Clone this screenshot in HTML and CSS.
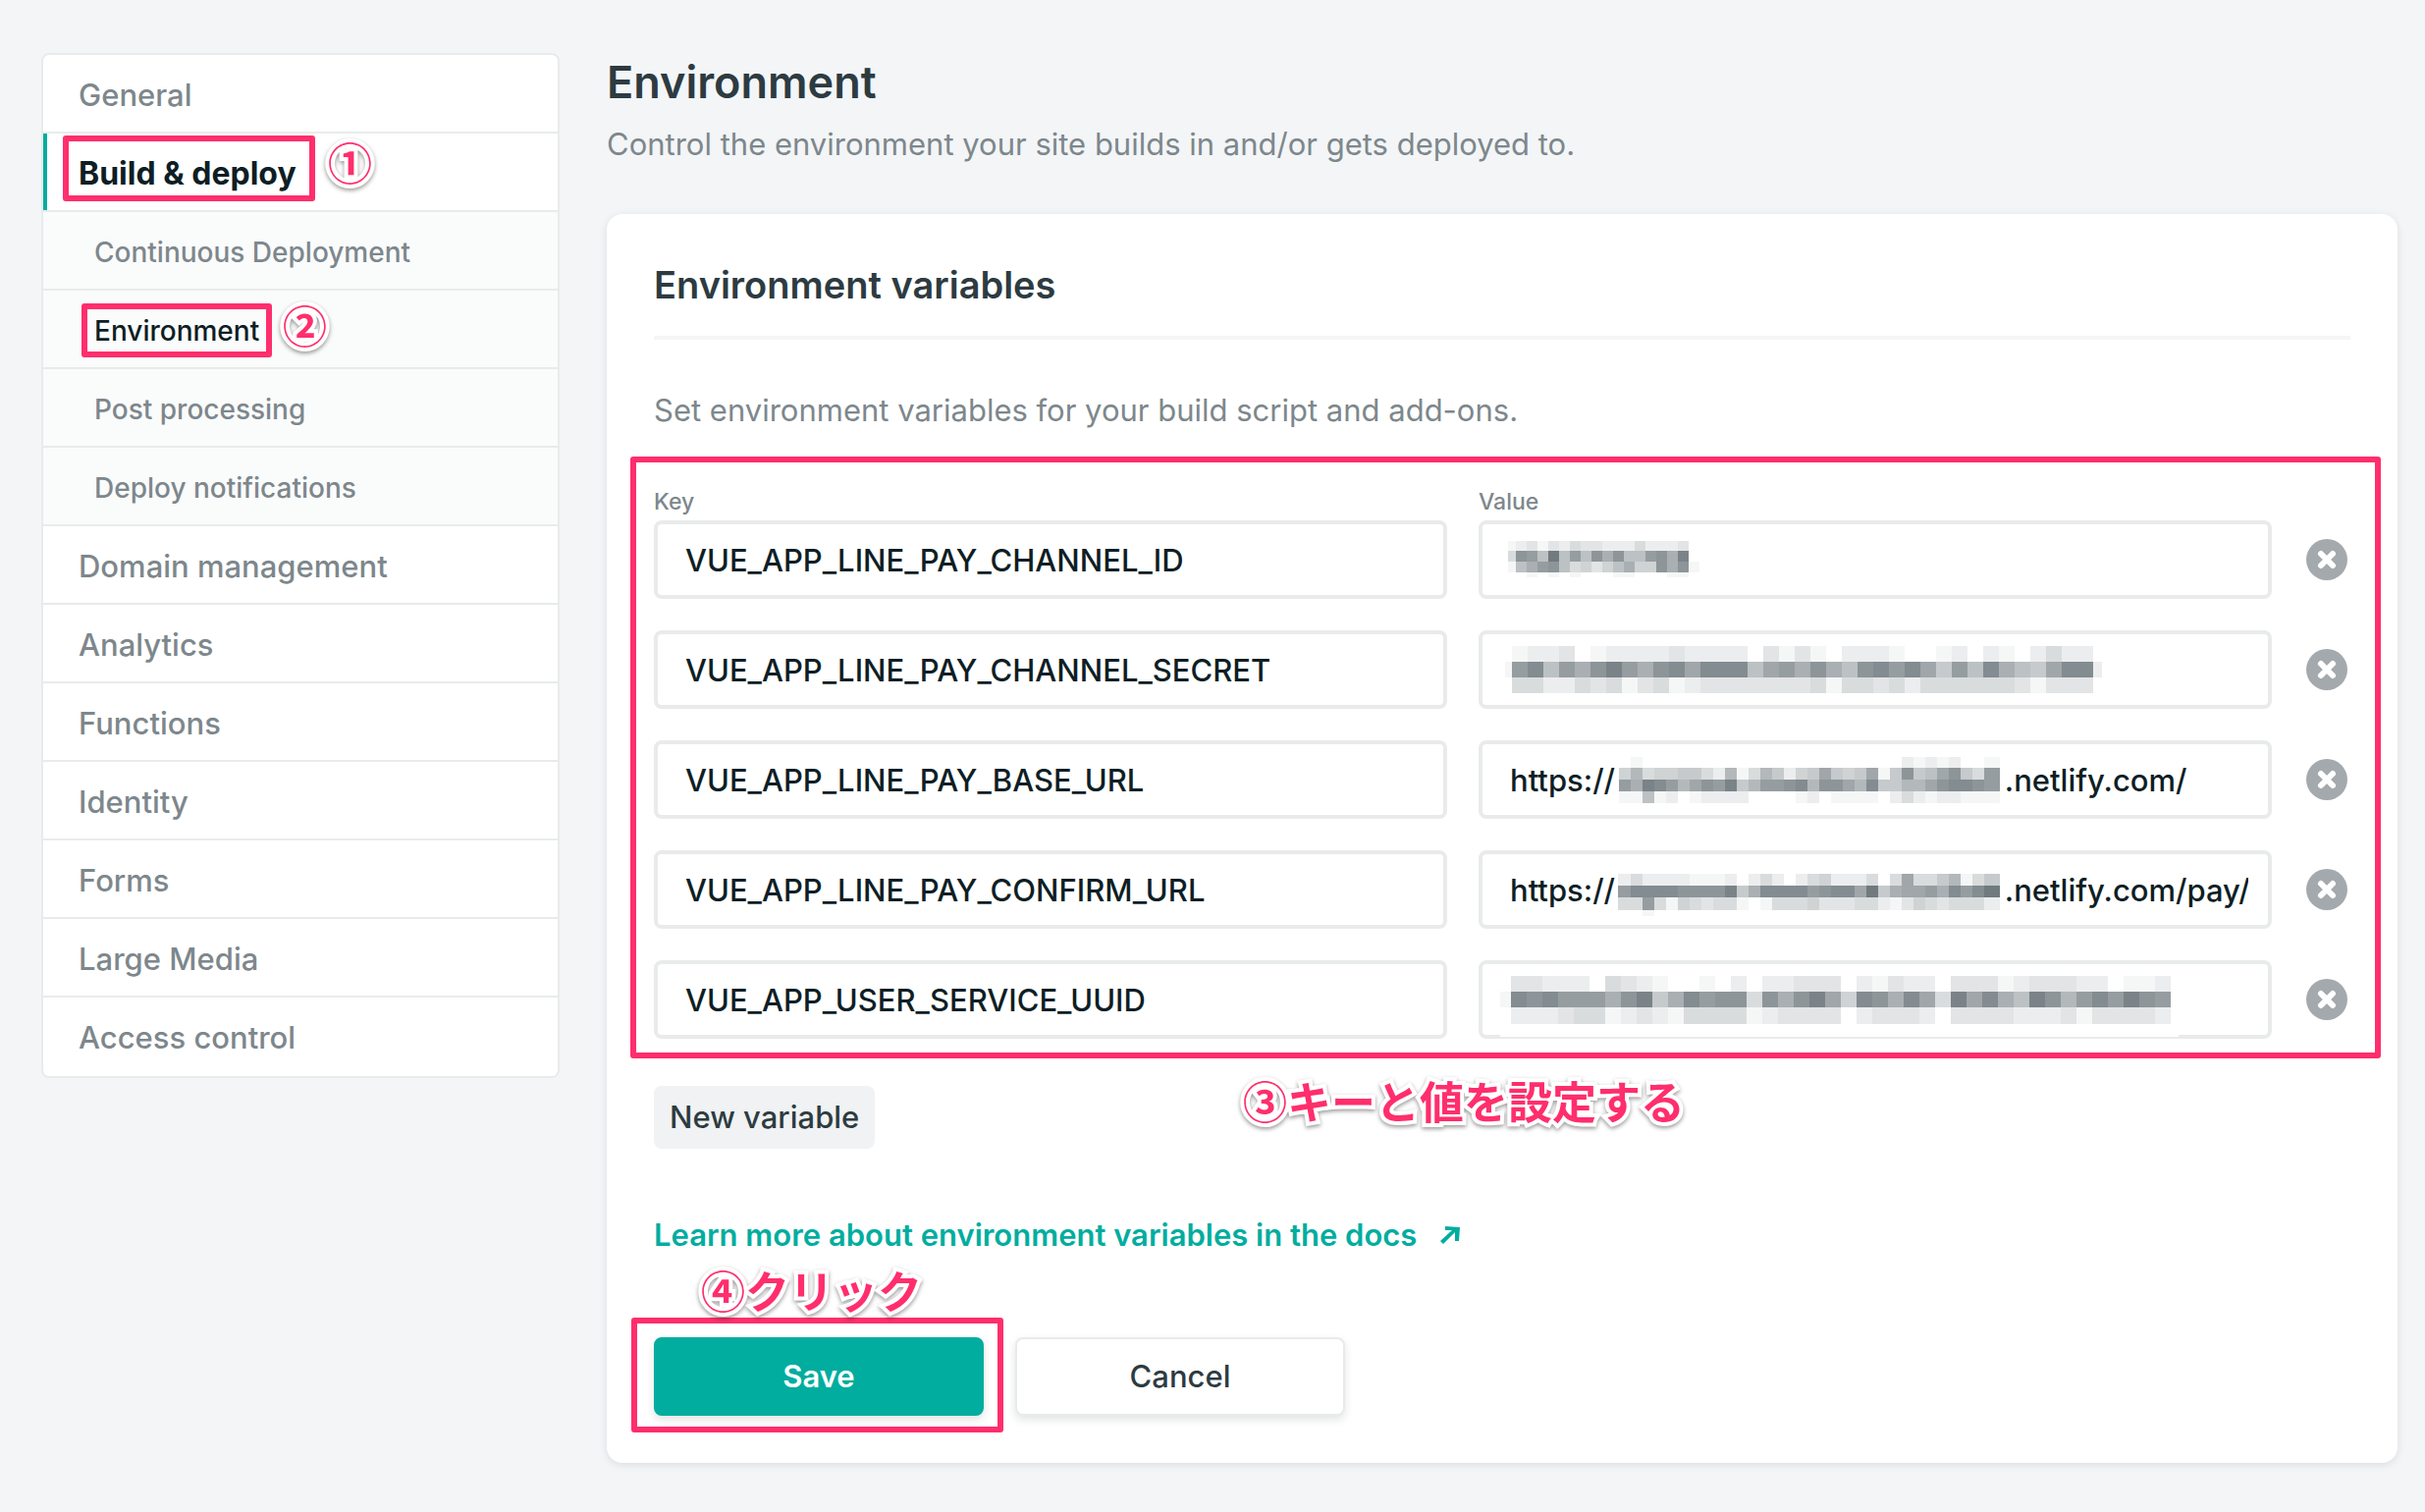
FILE: index.html
```html
<!DOCTYPE html>
<html lang="en">
<head>
<meta charset="utf-8">
<title>Environment</title>
<link rel="stylesheet" href="styles.css">
</head>
<body>
<div class="layout">
  <nav class="sidebar" aria-label="Site settings">
    <ul class="nav-list">
      <li class="nav-item"><a href="#">General</a></li>
      <li class="nav-item active"><a href="#">Build &amp; deploy</a><span class="frame frame-build"></span><span class="callout callout-1" lang="ja">①</span></li>
      <li class="nav-item sub"><a href="#">Continuous Deployment</a></li>
      <li class="nav-item sub current"><a href="#">Environment</a><span class="frame frame-env"></span><span class="callout callout-2" lang="ja">②</span></li>
      <li class="nav-item sub"><a href="#">Post processing</a></li>
      <li class="nav-item sub"><a href="#">Deploy notifications</a></li>
      <li class="nav-item"><a href="#">Domain management</a></li>
      <li class="nav-item"><a href="#">Analytics</a></li>
      <li class="nav-item"><a href="#">Functions</a></li>
      <li class="nav-item"><a href="#">Identity</a></li>
      <li class="nav-item"><a href="#">Forms</a></li>
      <li class="nav-item"><a href="#">Large Media</a></li>
      <li class="nav-item"><a href="#">Access control</a></li>
    </ul>
  </nav>

  <main class="main">
    <h1 class="page-title">Environment</h1>
    <p class="lead">Control the environment your site builds in and/or gets deployed to.</p>

    <form class="card">
      <h2 class="card-title">Environment variables</h2>
      <p class="card-text">Set environment variables for your build script and add-ons.</p>

      <div class="variables">
        <div class="labels">
          <label for="key-1">Key</label>
          <label for="value-1">Value</label>
        </div>
        <div class="row">
          <input class="field" id="key-1" type="text" value="VUE_APP_LINE_PAY_CHANNEL_ID">
          <div class="value"><input class="field" id="value-1" type="text"><svg class="mosaic mosaic-id" data-mosaic="id" aria-hidden="true"></svg></div>
          <button class="remove" type="button" aria-label="Remove"><svg viewBox="0 0 42 42" width="42" height="42"><circle cx="21" cy="21" r="21"/><path d="M15 15l12 12M27 15l-12 12"/></svg></button>
        </div>
        <div class="row">
          <input class="field" type="text" aria-label="Key" value="VUE_APP_LINE_PAY_CHANNEL_SECRET">
          <div class="value"><input class="field" type="text" aria-label="Value"><svg class="mosaic mosaic-secret" data-mosaic="secret" aria-hidden="true"></svg></div>
          <button class="remove" type="button" aria-label="Remove"><svg viewBox="0 0 42 42" width="42" height="42"><circle cx="21" cy="21" r="21"/><path d="M15 15l12 12M27 15l-12 12"/></svg></button>
        </div>
        <div class="row">
          <input class="field" type="text" aria-label="Key" value="VUE_APP_LINE_PAY_BASE_URL">
          <div class="value"><input class="field" type="text" aria-label="Value" value="https://&nbsp;&nbsp;&nbsp;&nbsp;&nbsp;&nbsp;&nbsp;&nbsp;&nbsp;&nbsp;&nbsp;&nbsp;&nbsp;&nbsp;&nbsp;&nbsp;&nbsp;&nbsp;&nbsp;&nbsp;&nbsp;&nbsp;&nbsp;&nbsp;&nbsp;&nbsp;&nbsp;&nbsp;&nbsp;&nbsp;&nbsp;&nbsp;&nbsp;&nbsp;&nbsp;&nbsp;&nbsp;&nbsp;&nbsp;&nbsp;&nbsp;&nbsp;&nbsp;&nbsp;&nbsp;&nbsp;&nbsp;&nbsp;.netlify.com/"><svg class="mosaic mosaic-base" data-mosaic="base" aria-hidden="true"></svg></div>
          <button class="remove" type="button" aria-label="Remove"><svg viewBox="0 0 42 42" width="42" height="42"><circle cx="21" cy="21" r="21"/><path d="M15 15l12 12M27 15l-12 12"/></svg></button>
        </div>
        <div class="row">
          <input class="field" type="text" aria-label="Key" value="VUE_APP_LINE_PAY_CONFIRM_URL">
          <div class="value"><input class="field" type="text" aria-label="Value" value="https://&nbsp;&nbsp;&nbsp;&nbsp;&nbsp;&nbsp;&nbsp;&nbsp;&nbsp;&nbsp;&nbsp;&nbsp;&nbsp;&nbsp;&nbsp;&nbsp;&nbsp;&nbsp;&nbsp;&nbsp;&nbsp;&nbsp;&nbsp;&nbsp;&nbsp;&nbsp;&nbsp;&nbsp;&nbsp;&nbsp;&nbsp;&nbsp;&nbsp;&nbsp;&nbsp;&nbsp;&nbsp;&nbsp;&nbsp;&nbsp;&nbsp;&nbsp;&nbsp;&nbsp;&nbsp;&nbsp;&nbsp;&nbsp;.netlify.com/pay/"><svg class="mosaic mosaic-confirm" data-mosaic="confirm" aria-hidden="true"></svg></div>
          <button class="remove" type="button" aria-label="Remove"><svg viewBox="0 0 42 42" width="42" height="42"><circle cx="21" cy="21" r="21"/><path d="M15 15l12 12M27 15l-12 12"/></svg></button>
        </div>
        <div class="row">
          <input class="field" type="text" aria-label="Key" value="VUE_APP_USER_SERVICE_UUID">
          <div class="value"><input class="field" type="text" aria-label="Value"><svg class="mosaic mosaic-uuid" data-mosaic="uuid" aria-hidden="true"></svg></div>
          <button class="remove" type="button" aria-label="Remove"><svg viewBox="0 0 42 42" width="42" height="42"><circle cx="21" cy="21" r="21"/><path d="M15 15l12 12M27 15l-12 12"/></svg></button>
        </div>
        <span class="frame frame-variables"></span>
      </div>

      <div class="add">
        <button class="btn-new" type="button">New variable</button>
        <span class="callout callout-3" lang="ja">③キーと値を設定する</span>
      </div>

      <p class="docs"><a href="#">Learn more about environment variables in the docs<svg viewBox="0 0 20 18" width="20" height="18" aria-hidden="true"><path d="M5 0L20 1L19 15H15L15 6L3 18L0 15L12 4H5Z"/></svg></a></p>

      <div class="actions">
        <button class="btn save" type="submit">Save</button>
        <button class="btn cancel" type="button">Cancel</button>
        <span class="frame frame-save"></span>
        <span class="callout callout-4" lang="ja">④クリック</span>
      </div>
    </form>
  </main>
</div>
<script src="mosaic.js"></script>
</body>
</html>
```
FILE: styles.css
```css
*,
*::before,
*::after {
  box-sizing: border-box;
}

body {
  margin: 0;
  background: #f3f5f7;
  color: #2d3b41;
  font-family: Inter, "Noto Sans CJK JP", sans-serif;
  font-size: 31px;
  line-height: 48px;
}

h1,
h2,
p,
ul {
  margin: 0;
  padding: 0;
}

button,
input {
  font: inherit;
  color: inherit;
}

.layout {
  display: grid;
  grid-template-columns: 528px minmax(0, 1fr);
  align-items: start;
  gap: 48px;
  padding: 54px 28px 48px 42px;
}

/* Sidebar */

.sidebar {
  border: 2px solid #e9ebeb;
  border-radius: 8px;
  background: #fff;
  overflow: hidden;
}

.nav-list {
  list-style: none;
}

.nav-item {
  position: relative;
  border-bottom: 2px solid #e9ebeb;
}

.nav-item:last-child {
  border-bottom-color: #fff;
}

.nav-item a {
  display: block;
  padding: 17px 36px 13px;
  color: #7d878c;
  font-weight: 500;
  text-decoration: none;
}

.nav-item.active a {
  padding-left: 32px;
  border-left: 4px solid #00ad9f;
  color: #0e1e25;
  font-size: 32px;
  font-weight: 700;
}

.nav-item.sub {
  background: #fafbfb;
}

.nav-item.sub a {
  padding-left: 52px;
  font-size: 28px;
}

.nav-item.current a {
  color: #0e1e25;
}

/* Main column */

.page-title {
  padding-top: 2px;
  font-size: 45px;
  font-weight: 600;
  line-height: 56px;
}

.lead {
  margin-top: 11px;
  color: #7d878c;
}

.card {
  margin-top: 47px;
  padding: 48px;
  border-radius: 16px;
  background: #fff;
  box-shadow: 0 2px 8px rgba(14, 30, 37, 0.1);
}

.card-title {
  padding-bottom: 28px;
  border-bottom: 4px solid #f5f6f6;
  font-size: 38px;
  font-weight: 600;
}

.card-text {
  margin-top: 48px;
  color: #7d878c;
}

.variables {
  position: relative;
  display: flex;
  flex-direction: column;
  gap: 32px;
  margin-top: 50px;
}

.labels,
.row {
  display: grid;
  grid-template-columns: minmax(0, 1fr) minmax(0, 1fr) 48px;
  align-items: center;
  gap: 32px;
}

.labels {
  margin-bottom: -32px;
  color: #7d878c;
  font-size: 23px;
  font-weight: 500;
  line-height: 38px;
}

.field {
  display: block;
  width: 100%;
  height: 80px;
  padding: 0 20px 0 28px;
  border: 4px solid #e9ebeb;
  border-radius: 8px;
  background: #fff;
  color: #0e1e25;
  font-weight: 500;
}

.value {
  position: relative;
}

.mosaic {
  position: absolute;
}

.mosaic-id { left: 30px; top: 21px; }
.mosaic-secret { left: 27px; top: 12px; }
.mosaic-base { left: 143px; top: 17px; }
.mosaic-confirm { left: 142px; top: 24px; }
.mosaic-uuid { left: 22px; top: 16px; }

.remove {
  display: flex;
  justify-content: center;
  padding: 0;
  border: 0;
  background: none;
}

.remove circle {
  fill: #a3a9ac;
}

.remove path {
  fill: none;
  stroke: #fff;
  stroke-width: 6;
  stroke-linecap: round;
}

.add {
  position: relative;
  display: flex;
  margin-top: 48px;
}

.btn-new {
  padding: 8px 16px;
  border: 0;
  border-radius: 8px;
  background: #f0f2f3;
  font-weight: 500;
}

.docs {
  margin-top: 64px;
}

.docs a {
  display: inline-flex;
  align-items: center;
  gap: 24px;
  color: #00ad9f;
  font-weight: 600;
  text-decoration: none;
}

.docs svg {
  fill: currentColor;
}

.actions {
  position: relative;
  display: flex;
  gap: 32px;
  margin-top: 80px;
}

.btn {
  width: 336px;
  height: 80px;
  border: 2px solid #e9ebeb;
  border-radius: 8px;
  background: #fff;
  box-shadow: 0 4px 8px rgba(14, 30, 37, 0.12);
  font-weight: 500;
}

.btn.save {
  border-color: #00ad9f;
  background: #00ad9f;
  color: #fff;
  font-weight: 600;
}

/* Step annotations */

.frame {
  position: absolute;
  border: 6px solid #ff2e6c;
  border-radius: 3px;
  pointer-events: none;
}

.frame-build { left: 20px; top: 2px; width: 257px; height: 67px; }
.frame-env { left: 39px; top: 13px; width: 194px; height: 55px; }
.frame-variables { inset: -27px -31px -20px -24px; }
.frame-save { left: -23px; top: -20px; width: 379px; height: 117px; }

.callout {
  position: absolute;
  color: #ff2e6c;
  font-family: "Noto Sans CJK JP", sans-serif;
  font-size: 45px;
  font-weight: 700;
  line-height: 48px;
  white-space: nowrap;
  -webkit-text-stroke: 8px #fff;
  paint-order: stroke fill;
  filter: drop-shadow(0 2px 2px rgba(0, 0, 0, 0.4));
}

.callout-1 { left: 290px; top: 5px; }
.callout-2 { left: 244px; top: 11px; }
.callout-3 { left: 600px; top: -9px; }
.callout-4 { left: 48px; top: -72px; }
```
FILE: mosaic.js
```js
// Pixelated covers for secret values. Each row is a string of hex shades, 0 = darkest, f = white.
const mosaics = {
  id: {
    first: 8, cell: 11, last: 11, heights: [10, 11, 11, 5],
    rows: ["edcecdbccdddbdddcf", "b3480848363884361f", "e86438baca86aa363e", "ffefefefffeefffeef"]
  },
  secret: {
    first: 7, cell: 16, last: 9, heights: [4, 16, 16, 16],
    rows: [
      "fffffffffffffffffffffffffffffffffffffff",
      "feddcfeddddcddddfcecefdddeffedfdefdbddf",
      "e4284631463252228546368324259482689522d",
      "fbbddbcbecbedcccccccbebbcbdbbbbbbcecccf"
    ]
  },
  base: {
    first: 12, cell: 12, last: 16, heights: [11, 12, 12, 12],
    rows: [
      "feffffffffffffffffffffffdededffe",
      "a7baa99bd7eb79da959a95e9398539b4",
      "46124753419744327335729977532234",
      "ee8edfeddddffffedfeeeefdbdeddeee"
    ]
  },
  confirm: {
    first: 13, cell: 12, last: 16, heights: [12, 12, 13, 6],
    rows: [
      "dbddddeeedfdbdfdbadddbfb5bb97eb9",
      "42222333319622224322509655462420",
      "bb4beabcbbefebbbacccbbdecabcbbbd",
      "ffefffffffffffffffffffffffffffff"
    ]
  },
  uuid: {
    first: 11, cell: 16, last: 8, heights: [16, 16, 17, 13],
    rows: [
      "fccdddfbcdeffefdfddcccfdecddfcccedcccddfeedf",
      "e232444631962433b36315a23625b15268137424134f",
      "fdddcbbedcdebbbbedccccfdcccdfccccdddceccccdf",
      "ffffffffffffffffffffffffffffffffffffffffffff"
    ]
  }
};

function shade(level) {
  const mix = (dark) => Math.round(dark + (255 - dark) * level / 15);
  return `rgb(${mix(112)},${mix(122)},${mix(127)})`;
}

for (const svg of document.querySelectorAll("[data-mosaic]")) {
  const { first, cell, last, heights, rows } = mosaics[svg.dataset.mosaic];
  const count = rows[0].length;
  svg.setAttribute("width", first + cell * (count - 2) + last);
  svg.setAttribute("height", heights.reduce((a, b) => a + b));
  svg.setAttribute("shape-rendering", "crispEdges");
  let y = 0;
  let cells = "";
  rows.forEach((row, r) => {
    let x = 0;
    [...row].forEach((digit, c) => {
      const width = c === 0 ? first : c === count - 1 ? last : cell;
      cells += `<rect x="${x}" y="${y}" width="${width}" height="${heights[r]}" fill="${shade(parseInt(digit, 16))}"/>`;
      x += width;
    });
    y += heights[r];
  });
  svg.innerHTML = cells;
}
```
